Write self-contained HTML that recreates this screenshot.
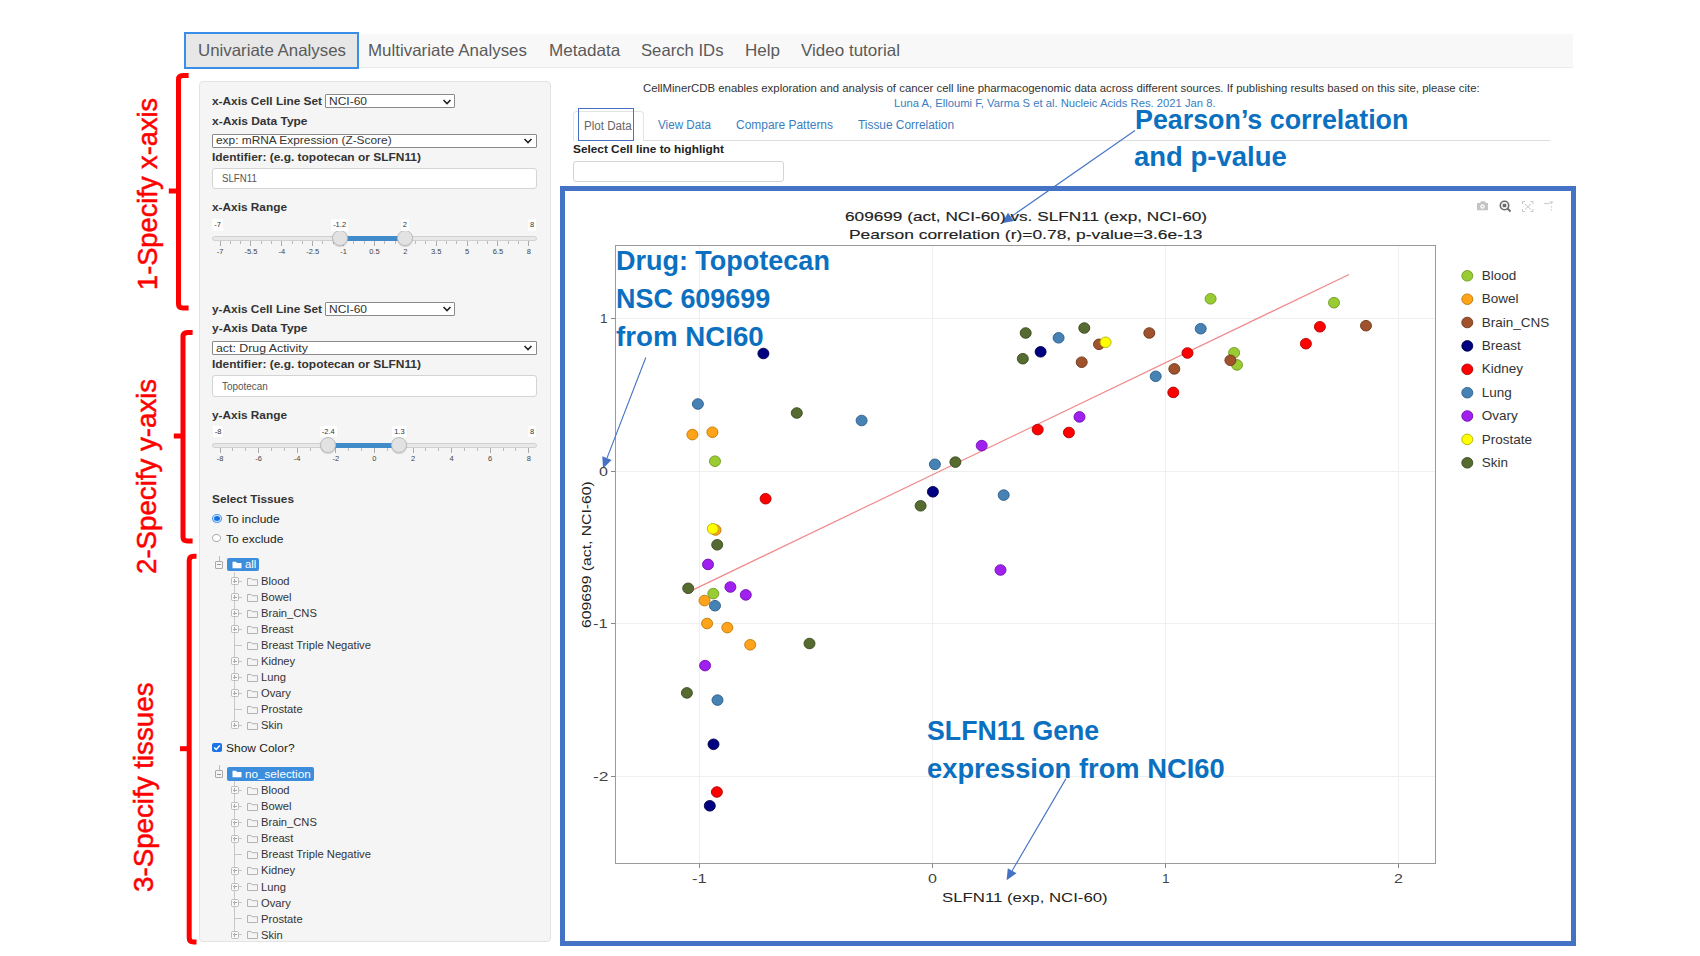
<!DOCTYPE html>
<html><head><meta charset="utf-8"><style>
html,body{margin:0;padding:0;background:#fff;}
body{width:1700px;height:956px;overflow:hidden;position:relative;font-family:'Liberation Sans', sans-serif;}
</style></head><body>
<div style="position:absolute;left:184.0px;top:34.0px;width:1388.5px;height:34.0px;background:#f8f8f8;border-bottom:1px solid #ececec;box-sizing:border-box"></div>
<div style="position:absolute;left:184.0px;top:31.5px;width:175.0px;height:37.0px;background:#e7e7e7;border:2.5px solid #3a8ee8;box-sizing:border-box"></div>
<div style="position:absolute;left:198.5px;top:80.5px;width:352.5px;height:861.5px;background:#f5f5f5;border:1px solid #e3e3e3;border-radius:4px;box-sizing:border-box"></div>
<div style="position:absolute;left:325.4px;top:94.4px;width:130.1px;height:14.1px;background:#fff;border:1px solid #8a8a8a;box-sizing:border-box;border-radius:1px"></div>
<svg style="position:absolute;left:441.5px;top:97.5px" width="10" height="8"><path d="M1.5 2 L5 5.5 L8.5 2" stroke="#222" stroke-width="1.6" fill="none"/></svg>
<div style="position:absolute;left:212.0px;top:133.5px;width:324.7px;height:14.0px;background:#fff;border:1px solid #8a8a8a;box-sizing:border-box;border-radius:1px"></div>
<svg style="position:absolute;left:522.7px;top:136.5px" width="10" height="8"><path d="M1.5 2 L5 5.5 L8.5 2" stroke="#222" stroke-width="1.6" fill="none"/></svg>
<div style="position:absolute;left:212.0px;top:168.4px;width:325.0px;height:20.9px;background:#fff;border:1px solid #d4d4d4;border-radius:3px;box-sizing:border-box"></div>
<div style="position:absolute;left:212.0px;top:235.7px;width:325.0px;height:5.0px;background:#e8e8e8;border:1px solid #d0d0d0;border-radius:3px;box-sizing:border-box"></div>
<div style="position:absolute;left:339.6px;top:235.7px;width:65.3px;height:5.0px;background:#428bca"></div>
<div style="position:absolute;left:219.5px;top:241.2px;width:1.0px;height:4.5px;background:#aaa"></div>
<div style="position:absolute;left:229.8px;top:241.2px;width:1.0px;height:2.5px;background:#bbb"></div>
<div style="position:absolute;left:240.1px;top:241.2px;width:1.0px;height:2.5px;background:#bbb"></div>
<div style="position:absolute;left:250.4px;top:241.2px;width:1.0px;height:4.5px;background:#aaa"></div>
<div style="position:absolute;left:260.7px;top:241.2px;width:1.0px;height:2.5px;background:#bbb"></div>
<div style="position:absolute;left:271.0px;top:241.2px;width:1.0px;height:2.5px;background:#bbb"></div>
<div style="position:absolute;left:281.3px;top:241.2px;width:1.0px;height:4.5px;background:#aaa"></div>
<div style="position:absolute;left:291.6px;top:241.2px;width:1.0px;height:2.5px;background:#bbb"></div>
<div style="position:absolute;left:301.8px;top:241.2px;width:1.0px;height:2.5px;background:#bbb"></div>
<div style="position:absolute;left:312.1px;top:241.2px;width:1.0px;height:4.5px;background:#aaa"></div>
<div style="position:absolute;left:322.4px;top:241.2px;width:1.0px;height:2.5px;background:#bbb"></div>
<div style="position:absolute;left:332.7px;top:241.2px;width:1.0px;height:2.5px;background:#bbb"></div>
<div style="position:absolute;left:343.0px;top:241.2px;width:1.0px;height:4.5px;background:#aaa"></div>
<div style="position:absolute;left:353.3px;top:241.2px;width:1.0px;height:2.5px;background:#bbb"></div>
<div style="position:absolute;left:363.6px;top:241.2px;width:1.0px;height:2.5px;background:#bbb"></div>
<div style="position:absolute;left:373.9px;top:241.2px;width:1.0px;height:4.5px;background:#aaa"></div>
<div style="position:absolute;left:384.2px;top:241.2px;width:1.0px;height:2.5px;background:#bbb"></div>
<div style="position:absolute;left:394.5px;top:241.2px;width:1.0px;height:2.5px;background:#bbb"></div>
<div style="position:absolute;left:404.8px;top:241.2px;width:1.0px;height:4.5px;background:#aaa"></div>
<div style="position:absolute;left:415.1px;top:241.2px;width:1.0px;height:2.5px;background:#bbb"></div>
<div style="position:absolute;left:425.4px;top:241.2px;width:1.0px;height:2.5px;background:#bbb"></div>
<div style="position:absolute;left:435.7px;top:241.2px;width:1.0px;height:4.5px;background:#aaa"></div>
<div style="position:absolute;left:446.0px;top:241.2px;width:1.0px;height:2.5px;background:#bbb"></div>
<div style="position:absolute;left:456.2px;top:241.2px;width:1.0px;height:2.5px;background:#bbb"></div>
<div style="position:absolute;left:466.5px;top:241.2px;width:1.0px;height:4.5px;background:#aaa"></div>
<div style="position:absolute;left:476.8px;top:241.2px;width:1.0px;height:2.5px;background:#bbb"></div>
<div style="position:absolute;left:487.1px;top:241.2px;width:1.0px;height:2.5px;background:#bbb"></div>
<div style="position:absolute;left:497.4px;top:241.2px;width:1.0px;height:4.5px;background:#aaa"></div>
<div style="position:absolute;left:507.7px;top:241.2px;width:1.0px;height:2.5px;background:#bbb"></div>
<div style="position:absolute;left:518.0px;top:241.2px;width:1.0px;height:2.5px;background:#bbb"></div>
<div style="position:absolute;left:528.3px;top:241.2px;width:1.0px;height:4.5px;background:#aaa"></div>
<div style="position:absolute;left:331.6px;top:230.2px;width:16px;height:16px;border-radius:50%;background:#e2e2e2;border:1px solid #bdbdbd;box-sizing:border-box;box-shadow:0 1px 1px rgba(0,0,0,0.15)"></div>
<div style="position:absolute;left:396.9px;top:230.2px;width:16px;height:16px;border-radius:50%;background:#e2e2e2;border:1px solid #bdbdbd;box-sizing:border-box;box-shadow:0 1px 1px rgba(0,0,0,0.15)"></div>
<div style="position:absolute;left:325.4px;top:302.4px;width:130.1px;height:14.1px;background:#fff;border:1px solid #8a8a8a;box-sizing:border-box;border-radius:1px"></div>
<svg style="position:absolute;left:441.5px;top:305.4px" width="10" height="8"><path d="M1.5 2 L5 5.5 L8.5 2" stroke="#222" stroke-width="1.6" fill="none"/></svg>
<div style="position:absolute;left:212.0px;top:341.1px;width:324.7px;height:13.5px;background:#fff;border:1px solid #8a8a8a;box-sizing:border-box;border-radius:1px"></div>
<svg style="position:absolute;left:522.7px;top:343.9px" width="10" height="8"><path d="M1.5 2 L5 5.5 L8.5 2" stroke="#222" stroke-width="1.6" fill="none"/></svg>
<div style="position:absolute;left:212.0px;top:375.3px;width:325.0px;height:22.0px;background:#fff;border:1px solid #d4d4d4;border-radius:3px;box-sizing:border-box"></div>
<div style="position:absolute;left:212.0px;top:442.5px;width:325.0px;height:5.0px;background:#e8e8e8;border:1px solid #d0d0d0;border-radius:3px;box-sizing:border-box"></div>
<div style="position:absolute;left:328.2px;top:442.5px;width:71.2px;height:5.0px;background:#428bca"></div>
<div style="position:absolute;left:219.5px;top:448.0px;width:1.0px;height:4.5px;background:#aaa"></div>
<div style="position:absolute;left:232.4px;top:448.0px;width:1.0px;height:2.5px;background:#bbb"></div>
<div style="position:absolute;left:245.2px;top:448.0px;width:1.0px;height:2.5px;background:#bbb"></div>
<div style="position:absolute;left:258.1px;top:448.0px;width:1.0px;height:4.5px;background:#aaa"></div>
<div style="position:absolute;left:271.0px;top:448.0px;width:1.0px;height:2.5px;background:#bbb"></div>
<div style="position:absolute;left:283.8px;top:448.0px;width:1.0px;height:2.5px;background:#bbb"></div>
<div style="position:absolute;left:296.7px;top:448.0px;width:1.0px;height:4.5px;background:#aaa"></div>
<div style="position:absolute;left:309.6px;top:448.0px;width:1.0px;height:2.5px;background:#bbb"></div>
<div style="position:absolute;left:322.4px;top:448.0px;width:1.0px;height:2.5px;background:#bbb"></div>
<div style="position:absolute;left:335.3px;top:448.0px;width:1.0px;height:4.5px;background:#aaa"></div>
<div style="position:absolute;left:348.2px;top:448.0px;width:1.0px;height:2.5px;background:#bbb"></div>
<div style="position:absolute;left:361.0px;top:448.0px;width:1.0px;height:2.5px;background:#bbb"></div>
<div style="position:absolute;left:373.9px;top:448.0px;width:1.0px;height:4.5px;background:#aaa"></div>
<div style="position:absolute;left:386.8px;top:448.0px;width:1.0px;height:2.5px;background:#bbb"></div>
<div style="position:absolute;left:399.6px;top:448.0px;width:1.0px;height:2.5px;background:#bbb"></div>
<div style="position:absolute;left:412.5px;top:448.0px;width:1.0px;height:4.5px;background:#aaa"></div>
<div style="position:absolute;left:425.4px;top:448.0px;width:1.0px;height:2.5px;background:#bbb"></div>
<div style="position:absolute;left:438.2px;top:448.0px;width:1.0px;height:2.5px;background:#bbb"></div>
<div style="position:absolute;left:451.1px;top:448.0px;width:1.0px;height:4.5px;background:#aaa"></div>
<div style="position:absolute;left:464.0px;top:448.0px;width:1.0px;height:2.5px;background:#bbb"></div>
<div style="position:absolute;left:476.8px;top:448.0px;width:1.0px;height:2.5px;background:#bbb"></div>
<div style="position:absolute;left:489.7px;top:448.0px;width:1.0px;height:4.5px;background:#aaa"></div>
<div style="position:absolute;left:502.6px;top:448.0px;width:1.0px;height:2.5px;background:#bbb"></div>
<div style="position:absolute;left:515.4px;top:448.0px;width:1.0px;height:2.5px;background:#bbb"></div>
<div style="position:absolute;left:528.3px;top:448.0px;width:1.0px;height:4.5px;background:#aaa"></div>
<div style="position:absolute;left:320.2px;top:437.0px;width:16px;height:16px;border-radius:50%;background:#e2e2e2;border:1px solid #bdbdbd;box-sizing:border-box;box-shadow:0 1px 1px rgba(0,0,0,0.15)"></div>
<div style="position:absolute;left:391.4px;top:437.0px;width:16px;height:16px;border-radius:50%;background:#e2e2e2;border:1px solid #bdbdbd;box-sizing:border-box;box-shadow:0 1px 1px rgba(0,0,0,0.15)"></div>
<svg style="position:absolute;left:210px;top:512px" width="14" height="13"><ellipse cx="7" cy="6.5" rx="4.5" ry="4" fill="#d6eaff" stroke="#4a9af0" stroke-width="1.1"/><ellipse cx="7" cy="6.5" rx="3" ry="2.5" fill="#1a6fe0"/></svg>
<div style="position:absolute;left:212.3px;top:533.5px;width:9px;height:8px;border-radius:50%;background:#fff;border:1px solid #a8a8a8;box-sizing:border-box"></div>
<div style="position:absolute;left:215px;top:560.5px;width:8px;height:8px;border:1px solid #aaa;box-sizing:border-box;border-radius:1px"></div>
<div style="position:absolute;left:217.0px;top:564.0px;width:4.0px;height:1.0px;background:#999"></div>
<div style="position:absolute;left:218.5px;top:555.5px;width:1.0px;height:5.0px;background:#bbb"></div>
<div style="position:absolute;left:227.3px;top:557.9px;width:32.0px;height:13.3px;background:#3c8ddb;border-radius:2px"></div>
<svg style="position:absolute;left:232px;top:560.5px" width="11" height="9"><path d="M0.5 0.8 h3.5 l1 1.2 h4.5 v5.2 h-9 z" fill="#fff"/></svg>
<div style="position:absolute;left:234.3px;top:571.5px;width:1.0px;height:153.9px;background:#c8c8c8"></div>
<div style="position:absolute;left:230.5px;top:577.0px;width:8px;height:8px;border:1px solid #bdbdbd;box-sizing:border-box;background:#f8f8f8;border-radius:1.5px"></div>
<div style="position:absolute;left:232.5px;top:580.5px;width:4.0px;height:1.0px;background:#aaa"></div>
<div style="position:absolute;left:234.0px;top:579.0px;width:1.0px;height:4.0px;background:#aaa"></div>
<div style="position:absolute;left:238.5px;top:580.5px;width:3.5px;height:1.0px;background:#c8c8c8"></div>
<svg style="position:absolute;left:247px;top:576.5px" width="11" height="9"><path d="M0.5 1.5 h3.5 l1 1.2 h5.5 v5.8 h-10 z" fill="none" stroke="#ababab" stroke-width="0.9"/></svg>
<div style="position:absolute;left:230.5px;top:593.0px;width:8px;height:8px;border:1px solid #bdbdbd;box-sizing:border-box;background:#f8f8f8;border-radius:1.5px"></div>
<div style="position:absolute;left:232.5px;top:596.5px;width:4.0px;height:1.0px;background:#aaa"></div>
<div style="position:absolute;left:234.0px;top:595.0px;width:1.0px;height:4.0px;background:#aaa"></div>
<div style="position:absolute;left:238.5px;top:596.5px;width:3.5px;height:1.0px;background:#c8c8c8"></div>
<svg style="position:absolute;left:247px;top:592.5px" width="11" height="9"><path d="M0.5 1.5 h3.5 l1 1.2 h5.5 v5.8 h-10 z" fill="none" stroke="#ababab" stroke-width="0.9"/></svg>
<div style="position:absolute;left:230.5px;top:609.1px;width:8px;height:8px;border:1px solid #bdbdbd;box-sizing:border-box;background:#f8f8f8;border-radius:1.5px"></div>
<div style="position:absolute;left:232.5px;top:612.6px;width:4.0px;height:1.0px;background:#aaa"></div>
<div style="position:absolute;left:234.0px;top:611.1px;width:1.0px;height:4.0px;background:#aaa"></div>
<div style="position:absolute;left:238.5px;top:612.6px;width:3.5px;height:1.0px;background:#c8c8c8"></div>
<svg style="position:absolute;left:247px;top:608.6px" width="11" height="9"><path d="M0.5 1.5 h3.5 l1 1.2 h5.5 v5.8 h-10 z" fill="none" stroke="#ababab" stroke-width="0.9"/></svg>
<div style="position:absolute;left:230.5px;top:625.1px;width:8px;height:8px;border:1px solid #bdbdbd;box-sizing:border-box;background:#f8f8f8;border-radius:1.5px"></div>
<div style="position:absolute;left:232.5px;top:628.6px;width:4.0px;height:1.0px;background:#aaa"></div>
<div style="position:absolute;left:234.0px;top:627.1px;width:1.0px;height:4.0px;background:#aaa"></div>
<div style="position:absolute;left:238.5px;top:628.6px;width:3.5px;height:1.0px;background:#c8c8c8"></div>
<svg style="position:absolute;left:247px;top:624.6px" width="11" height="9"><path d="M0.5 1.5 h3.5 l1 1.2 h5.5 v5.8 h-10 z" fill="none" stroke="#ababab" stroke-width="0.9"/></svg>
<div style="position:absolute;left:235.0px;top:644.7px;width:7.0px;height:1.0px;background:#c8c8c8"></div>
<svg style="position:absolute;left:247px;top:640.7px" width="11" height="9"><path d="M0.5 1.5 h3.5 l1 1.2 h5.5 v5.8 h-10 z" fill="none" stroke="#ababab" stroke-width="0.9"/></svg>
<div style="position:absolute;left:230.5px;top:657.2px;width:8px;height:8px;border:1px solid #bdbdbd;box-sizing:border-box;background:#f8f8f8;border-radius:1.5px"></div>
<div style="position:absolute;left:232.5px;top:660.7px;width:4.0px;height:1.0px;background:#aaa"></div>
<div style="position:absolute;left:234.0px;top:659.2px;width:1.0px;height:4.0px;background:#aaa"></div>
<div style="position:absolute;left:238.5px;top:660.7px;width:3.5px;height:1.0px;background:#c8c8c8"></div>
<svg style="position:absolute;left:247px;top:656.7px" width="11" height="9"><path d="M0.5 1.5 h3.5 l1 1.2 h5.5 v5.8 h-10 z" fill="none" stroke="#ababab" stroke-width="0.9"/></svg>
<div style="position:absolute;left:230.5px;top:673.2px;width:8px;height:8px;border:1px solid #bdbdbd;box-sizing:border-box;background:#f8f8f8;border-radius:1.5px"></div>
<div style="position:absolute;left:232.5px;top:676.7px;width:4.0px;height:1.0px;background:#aaa"></div>
<div style="position:absolute;left:234.0px;top:675.2px;width:1.0px;height:4.0px;background:#aaa"></div>
<div style="position:absolute;left:238.5px;top:676.7px;width:3.5px;height:1.0px;background:#c8c8c8"></div>
<svg style="position:absolute;left:247px;top:672.7px" width="11" height="9"><path d="M0.5 1.5 h3.5 l1 1.2 h5.5 v5.8 h-10 z" fill="none" stroke="#ababab" stroke-width="0.9"/></svg>
<div style="position:absolute;left:230.5px;top:689.3px;width:8px;height:8px;border:1px solid #bdbdbd;box-sizing:border-box;background:#f8f8f8;border-radius:1.5px"></div>
<div style="position:absolute;left:232.5px;top:692.8px;width:4.0px;height:1.0px;background:#aaa"></div>
<div style="position:absolute;left:234.0px;top:691.3px;width:1.0px;height:4.0px;background:#aaa"></div>
<div style="position:absolute;left:238.5px;top:692.8px;width:3.5px;height:1.0px;background:#c8c8c8"></div>
<svg style="position:absolute;left:247px;top:688.8px" width="11" height="9"><path d="M0.5 1.5 h3.5 l1 1.2 h5.5 v5.8 h-10 z" fill="none" stroke="#ababab" stroke-width="0.9"/></svg>
<div style="position:absolute;left:235.0px;top:708.8px;width:7.0px;height:1.0px;background:#c8c8c8"></div>
<svg style="position:absolute;left:247px;top:704.8px" width="11" height="9"><path d="M0.5 1.5 h3.5 l1 1.2 h5.5 v5.8 h-10 z" fill="none" stroke="#ababab" stroke-width="0.9"/></svg>
<div style="position:absolute;left:230.5px;top:721.4px;width:8px;height:8px;border:1px solid #bdbdbd;box-sizing:border-box;background:#f8f8f8;border-radius:1.5px"></div>
<div style="position:absolute;left:232.5px;top:724.9px;width:4.0px;height:1.0px;background:#aaa"></div>
<div style="position:absolute;left:234.0px;top:723.4px;width:1.0px;height:4.0px;background:#aaa"></div>
<div style="position:absolute;left:238.5px;top:724.9px;width:3.5px;height:1.0px;background:#c8c8c8"></div>
<svg style="position:absolute;left:247px;top:720.9px" width="11" height="9"><path d="M0.5 1.5 h3.5 l1 1.2 h5.5 v5.8 h-10 z" fill="none" stroke="#ababab" stroke-width="0.9"/></svg>
<div style="position:absolute;left:212.2px;top:743.2px;width:9.4px;height:8.6px;border-radius:2px;background:#1a73e8"></div>
<svg style="position:absolute;left:212.2px;top:743.2px" width="10" height="9"><path d="M2.2 4.5 L4.2 6.5 L7.8 2.5" stroke="#fff" stroke-width="1.5" fill="none"/></svg>
<div style="position:absolute;left:215px;top:770.0px;width:8px;height:8px;border:1px solid #aaa;box-sizing:border-box;border-radius:1px"></div>
<div style="position:absolute;left:217.0px;top:773.5px;width:4.0px;height:1.0px;background:#999"></div>
<div style="position:absolute;left:218.5px;top:765.0px;width:1.0px;height:5.0px;background:#bbb"></div>
<div style="position:absolute;left:227.3px;top:767.4px;width:86.4px;height:13.3px;background:#3c8ddb;border-radius:2px"></div>
<svg style="position:absolute;left:232px;top:770.0px" width="11" height="9"><path d="M0.5 0.8 h3.5 l1 1.2 h4.5 v5.2 h-9 z" fill="#fff"/></svg>
<div style="position:absolute;left:234.3px;top:781.0px;width:1.0px;height:153.9px;background:#c8c8c8"></div>
<div style="position:absolute;left:230.5px;top:786.4px;width:8px;height:8px;border:1px solid #bdbdbd;box-sizing:border-box;background:#f8f8f8;border-radius:1.5px"></div>
<div style="position:absolute;left:232.5px;top:789.9px;width:4.0px;height:1.0px;background:#aaa"></div>
<div style="position:absolute;left:234.0px;top:788.4px;width:1.0px;height:4.0px;background:#aaa"></div>
<div style="position:absolute;left:238.5px;top:789.9px;width:3.5px;height:1.0px;background:#c8c8c8"></div>
<svg style="position:absolute;left:247px;top:785.9px" width="11" height="9"><path d="M0.5 1.5 h3.5 l1 1.2 h5.5 v5.8 h-10 z" fill="none" stroke="#ababab" stroke-width="0.9"/></svg>
<div style="position:absolute;left:230.5px;top:802.4px;width:8px;height:8px;border:1px solid #bdbdbd;box-sizing:border-box;background:#f8f8f8;border-radius:1.5px"></div>
<div style="position:absolute;left:232.5px;top:805.9px;width:4.0px;height:1.0px;background:#aaa"></div>
<div style="position:absolute;left:234.0px;top:804.4px;width:1.0px;height:4.0px;background:#aaa"></div>
<div style="position:absolute;left:238.5px;top:805.9px;width:3.5px;height:1.0px;background:#c8c8c8"></div>
<svg style="position:absolute;left:247px;top:801.9px" width="11" height="9"><path d="M0.5 1.5 h3.5 l1 1.2 h5.5 v5.8 h-10 z" fill="none" stroke="#ababab" stroke-width="0.9"/></svg>
<div style="position:absolute;left:230.5px;top:818.5px;width:8px;height:8px;border:1px solid #bdbdbd;box-sizing:border-box;background:#f8f8f8;border-radius:1.5px"></div>
<div style="position:absolute;left:232.5px;top:822.0px;width:4.0px;height:1.0px;background:#aaa"></div>
<div style="position:absolute;left:234.0px;top:820.5px;width:1.0px;height:4.0px;background:#aaa"></div>
<div style="position:absolute;left:238.5px;top:822.0px;width:3.5px;height:1.0px;background:#c8c8c8"></div>
<svg style="position:absolute;left:247px;top:818.0px" width="11" height="9"><path d="M0.5 1.5 h3.5 l1 1.2 h5.5 v5.8 h-10 z" fill="none" stroke="#ababab" stroke-width="0.9"/></svg>
<div style="position:absolute;left:230.5px;top:834.5px;width:8px;height:8px;border:1px solid #bdbdbd;box-sizing:border-box;background:#f8f8f8;border-radius:1.5px"></div>
<div style="position:absolute;left:232.5px;top:838.0px;width:4.0px;height:1.0px;background:#aaa"></div>
<div style="position:absolute;left:234.0px;top:836.5px;width:1.0px;height:4.0px;background:#aaa"></div>
<div style="position:absolute;left:238.5px;top:838.0px;width:3.5px;height:1.0px;background:#c8c8c8"></div>
<svg style="position:absolute;left:247px;top:834.0px" width="11" height="9"><path d="M0.5 1.5 h3.5 l1 1.2 h5.5 v5.8 h-10 z" fill="none" stroke="#ababab" stroke-width="0.9"/></svg>
<div style="position:absolute;left:235.0px;top:854.1px;width:7.0px;height:1.0px;background:#c8c8c8"></div>
<svg style="position:absolute;left:247px;top:850.1px" width="11" height="9"><path d="M0.5 1.5 h3.5 l1 1.2 h5.5 v5.8 h-10 z" fill="none" stroke="#ababab" stroke-width="0.9"/></svg>
<div style="position:absolute;left:230.5px;top:866.6px;width:8px;height:8px;border:1px solid #bdbdbd;box-sizing:border-box;background:#f8f8f8;border-radius:1.5px"></div>
<div style="position:absolute;left:232.5px;top:870.1px;width:4.0px;height:1.0px;background:#aaa"></div>
<div style="position:absolute;left:234.0px;top:868.6px;width:1.0px;height:4.0px;background:#aaa"></div>
<div style="position:absolute;left:238.5px;top:870.1px;width:3.5px;height:1.0px;background:#c8c8c8"></div>
<svg style="position:absolute;left:247px;top:866.1px" width="11" height="9"><path d="M0.5 1.5 h3.5 l1 1.2 h5.5 v5.8 h-10 z" fill="none" stroke="#ababab" stroke-width="0.9"/></svg>
<div style="position:absolute;left:230.5px;top:882.7px;width:8px;height:8px;border:1px solid #bdbdbd;box-sizing:border-box;background:#f8f8f8;border-radius:1.5px"></div>
<div style="position:absolute;left:232.5px;top:886.2px;width:4.0px;height:1.0px;background:#aaa"></div>
<div style="position:absolute;left:234.0px;top:884.7px;width:1.0px;height:4.0px;background:#aaa"></div>
<div style="position:absolute;left:238.5px;top:886.2px;width:3.5px;height:1.0px;background:#c8c8c8"></div>
<svg style="position:absolute;left:247px;top:882.2px" width="11" height="9"><path d="M0.5 1.5 h3.5 l1 1.2 h5.5 v5.8 h-10 z" fill="none" stroke="#ababab" stroke-width="0.9"/></svg>
<div style="position:absolute;left:230.5px;top:898.8px;width:8px;height:8px;border:1px solid #bdbdbd;box-sizing:border-box;background:#f8f8f8;border-radius:1.5px"></div>
<div style="position:absolute;left:232.5px;top:902.2px;width:4.0px;height:1.0px;background:#aaa"></div>
<div style="position:absolute;left:234.0px;top:900.8px;width:1.0px;height:4.0px;background:#aaa"></div>
<div style="position:absolute;left:238.5px;top:902.2px;width:3.5px;height:1.0px;background:#c8c8c8"></div>
<svg style="position:absolute;left:247px;top:898.2px" width="11" height="9"><path d="M0.5 1.5 h3.5 l1 1.2 h5.5 v5.8 h-10 z" fill="none" stroke="#ababab" stroke-width="0.9"/></svg>
<div style="position:absolute;left:235.0px;top:918.3px;width:7.0px;height:1.0px;background:#c8c8c8"></div>
<svg style="position:absolute;left:247px;top:914.3px" width="11" height="9"><path d="M0.5 1.5 h3.5 l1 1.2 h5.5 v5.8 h-10 z" fill="none" stroke="#ababab" stroke-width="0.9"/></svg>
<div style="position:absolute;left:230.5px;top:930.9px;width:8px;height:8px;border:1px solid #bdbdbd;box-sizing:border-box;background:#f8f8f8;border-radius:1.5px"></div>
<div style="position:absolute;left:232.5px;top:934.4px;width:4.0px;height:1.0px;background:#aaa"></div>
<div style="position:absolute;left:234.0px;top:932.9px;width:1.0px;height:4.0px;background:#aaa"></div>
<div style="position:absolute;left:238.5px;top:934.4px;width:3.5px;height:1.0px;background:#c8c8c8"></div>
<svg style="position:absolute;left:247px;top:930.4px" width="11" height="9"><path d="M0.5 1.5 h3.5 l1 1.2 h5.5 v5.8 h-10 z" fill="none" stroke="#ababab" stroke-width="0.9"/></svg>
<div style="position:absolute;left:573.4px;top:140.0px;width:976.2px;height:1.0px;background:#dddddd"></div>
<div style="position:absolute;left:573.4px;top:111.4px;width:71px;height:29.6px;border:1px solid #e4e4e4;border-bottom:none;border-radius:4px 4px 0 0;background:#fff;box-sizing:border-box"></div>
<div style="position:absolute;left:578.1px;top:108.3px;width:55.9px;height:32.5px;border:1.8px solid #4670c4;box-sizing:border-box"></div>
<div style="position:absolute;left:573.4px;top:161.0px;width:210.6px;height:21.3px;background:#fff;border:1px solid #d4d4d4;border-radius:3px;box-sizing:border-box"></div>
<div style="position:absolute;left:560.0px;top:186.0px;width:1015.5px;height:759.5px;border:5px solid #4472c4;box-sizing:border-box"></div>
<div style="position:absolute;left:698.6px;top:245.0px;width:1.0px;height:618.8px;background:#efefef"></div>
<div style="position:absolute;left:698.6px;top:863.8px;width:1.0px;height:4.0px;background:#888"></div>
<div style="position:absolute;left:931.8px;top:245.0px;width:1.0px;height:618.8px;background:#efefef"></div>
<div style="position:absolute;left:931.8px;top:863.8px;width:1.0px;height:4.0px;background:#888"></div>
<div style="position:absolute;left:1165.0px;top:245.0px;width:1.0px;height:618.8px;background:#efefef"></div>
<div style="position:absolute;left:1165.0px;top:863.8px;width:1.0px;height:4.0px;background:#888"></div>
<div style="position:absolute;left:1398.2px;top:245.0px;width:1.0px;height:618.8px;background:#efefef"></div>
<div style="position:absolute;left:1398.2px;top:863.8px;width:1.0px;height:4.0px;background:#888"></div>
<div style="position:absolute;left:615.3px;top:318.2px;width:820.1px;height:1.0px;background:#efefef"></div>
<div style="position:absolute;left:611.3px;top:318.2px;width:4.0px;height:1.0px;background:#888"></div>
<div style="position:absolute;left:615.3px;top:470.8px;width:820.1px;height:1.0px;background:#efefef"></div>
<div style="position:absolute;left:611.3px;top:470.8px;width:4.0px;height:1.0px;background:#888"></div>
<div style="position:absolute;left:615.3px;top:623.4px;width:820.1px;height:1.0px;background:#efefef"></div>
<div style="position:absolute;left:611.3px;top:623.4px;width:4.0px;height:1.0px;background:#888"></div>
<div style="position:absolute;left:615.3px;top:776.0px;width:820.1px;height:1.0px;background:#efefef"></div>
<div style="position:absolute;left:611.3px;top:776.0px;width:4.0px;height:1.0px;background:#888"></div>
<div style="position:absolute;left:614.8px;top:244.5px;width:821.1px;height:619.8px;border:1.3px solid #9a9a9a;box-sizing:border-box"></div>
<svg style="position:absolute;left:0;top:0" width="1700" height="956">
<line x1="693" y1="589.9" x2="1349" y2="274.5" stroke="#f08a8a" stroke-width="1.2"/>
<ellipse cx="763.4" cy="353.5" rx="5.5" ry="5.3" fill="#000080" stroke="#00004a" stroke-width="0.9"/>
<ellipse cx="697.9" cy="404" rx="5.5" ry="5.3" fill="#4682b4" stroke="#2e5d88" stroke-width="0.9"/>
<ellipse cx="796.8" cy="413" rx="5.5" ry="5.3" fill="#556b2f" stroke="#3a4a1e" stroke-width="0.9"/>
<ellipse cx="861.6" cy="420.5" rx="5.5" ry="5.3" fill="#4682b4" stroke="#2e5d88" stroke-width="0.9"/>
<ellipse cx="692.4" cy="434.6" rx="5.5" ry="5.3" fill="#ffa31a" stroke="#c07800" stroke-width="0.9"/>
<ellipse cx="712.4" cy="432.2" rx="5.5" ry="5.3" fill="#ffa31a" stroke="#c07800" stroke-width="0.9"/>
<ellipse cx="715" cy="461.2" rx="5.5" ry="5.3" fill="#99cc33" stroke="#6e9a1e" stroke-width="0.9"/>
<ellipse cx="765.6" cy="498.7" rx="5.5" ry="5.3" fill="#ff0000" stroke="#b00000" stroke-width="0.9"/>
<ellipse cx="715.5" cy="530" rx="5.5" ry="5.3" fill="#ffa31a" stroke="#c07800" stroke-width="0.9"/>
<ellipse cx="712.8" cy="528.8" rx="5.5" ry="5.3" fill="#ffff00" stroke="#b0b000" stroke-width="0.9"/>
<ellipse cx="717.2" cy="544.8" rx="5.5" ry="5.3" fill="#556b2f" stroke="#3a4a1e" stroke-width="0.9"/>
<ellipse cx="708" cy="564.4" rx="5.5" ry="5.3" fill="#a020f0" stroke="#7010b0" stroke-width="0.9"/>
<ellipse cx="688.2" cy="588.3" rx="5.5" ry="5.3" fill="#556b2f" stroke="#3a4a1e" stroke-width="0.9"/>
<ellipse cx="730.4" cy="587" rx="5.5" ry="5.3" fill="#a020f0" stroke="#7010b0" stroke-width="0.9"/>
<ellipse cx="713.3" cy="593.6" rx="5.5" ry="5.3" fill="#99cc33" stroke="#6e9a1e" stroke-width="0.9"/>
<ellipse cx="745.8" cy="594.9" rx="5.5" ry="5.3" fill="#a020f0" stroke="#7010b0" stroke-width="0.9"/>
<ellipse cx="704.5" cy="600.6" rx="5.5" ry="5.3" fill="#ffa31a" stroke="#c07800" stroke-width="0.9"/>
<ellipse cx="715" cy="605.7" rx="5.5" ry="5.3" fill="#4682b4" stroke="#2e5d88" stroke-width="0.9"/>
<ellipse cx="707.1" cy="623.5" rx="5.5" ry="5.3" fill="#ffa31a" stroke="#c07800" stroke-width="0.9"/>
<ellipse cx="727.3" cy="627.6" rx="5.5" ry="5.3" fill="#ffa31a" stroke="#c07800" stroke-width="0.9"/>
<ellipse cx="750.2" cy="644.8" rx="5.5" ry="5.3" fill="#ffa31a" stroke="#c07800" stroke-width="0.9"/>
<ellipse cx="809.5" cy="643.5" rx="5.5" ry="5.3" fill="#556b2f" stroke="#3a4a1e" stroke-width="0.9"/>
<ellipse cx="705.1" cy="665.6" rx="5.5" ry="5.3" fill="#a020f0" stroke="#7010b0" stroke-width="0.9"/>
<ellipse cx="686.9" cy="692.9" rx="5.5" ry="5.3" fill="#556b2f" stroke="#3a4a1e" stroke-width="0.9"/>
<ellipse cx="717.5" cy="700.1" rx="5.5" ry="5.3" fill="#4682b4" stroke="#2e5d88" stroke-width="0.9"/>
<ellipse cx="713.5" cy="744.3" rx="5.5" ry="5.3" fill="#000080" stroke="#00004a" stroke-width="0.9"/>
<ellipse cx="716.9" cy="792" rx="5.5" ry="5.3" fill="#ff0000" stroke="#b00000" stroke-width="0.9"/>
<ellipse cx="709.8" cy="805.8" rx="5.5" ry="5.3" fill="#000080" stroke="#00004a" stroke-width="0.9"/>
<ellipse cx="1025.7" cy="333" rx="5.5" ry="5.3" fill="#556b2f" stroke="#3a4a1e" stroke-width="0.9"/>
<ellipse cx="1058.6" cy="337.8" rx="5.5" ry="5.3" fill="#4682b4" stroke="#2e5d88" stroke-width="0.9"/>
<ellipse cx="1084.3" cy="328" rx="5.5" ry="5.3" fill="#556b2f" stroke="#3a4a1e" stroke-width="0.9"/>
<ellipse cx="1040.6" cy="351.8" rx="5.5" ry="5.3" fill="#000080" stroke="#00004a" stroke-width="0.9"/>
<ellipse cx="1022.8" cy="358.7" rx="5.5" ry="5.3" fill="#556b2f" stroke="#3a4a1e" stroke-width="0.9"/>
<ellipse cx="1081.7" cy="362.2" rx="5.5" ry="5.3" fill="#a0522d" stroke="#6e3518" stroke-width="0.9"/>
<ellipse cx="1079.5" cy="416.9" rx="5.5" ry="5.3" fill="#a020f0" stroke="#7010b0" stroke-width="0.9"/>
<ellipse cx="1037.7" cy="429.6" rx="5.5" ry="5.3" fill="#ff0000" stroke="#b00000" stroke-width="0.9"/>
<ellipse cx="1068.9" cy="432.5" rx="5.5" ry="5.3" fill="#ff0000" stroke="#b00000" stroke-width="0.9"/>
<ellipse cx="981.7" cy="445.6" rx="5.5" ry="5.3" fill="#a020f0" stroke="#7010b0" stroke-width="0.9"/>
<ellipse cx="934.9" cy="464.3" rx="5.5" ry="5.3" fill="#4682b4" stroke="#2e5d88" stroke-width="0.9"/>
<ellipse cx="955.4" cy="462.1" rx="5.5" ry="5.3" fill="#556b2f" stroke="#3a4a1e" stroke-width="0.9"/>
<ellipse cx="932.9" cy="491.8" rx="5.5" ry="5.3" fill="#000080" stroke="#00004a" stroke-width="0.9"/>
<ellipse cx="1003.7" cy="495.1" rx="5.5" ry="5.3" fill="#4682b4" stroke="#2e5d88" stroke-width="0.9"/>
<ellipse cx="920.6" cy="505.8" rx="5.5" ry="5.3" fill="#556b2f" stroke="#3a4a1e" stroke-width="0.9"/>
<ellipse cx="1000.5" cy="570" rx="5.5" ry="5.3" fill="#a020f0" stroke="#7010b0" stroke-width="0.9"/>
<ellipse cx="1210.6" cy="298.8" rx="5.5" ry="5.3" fill="#99cc33" stroke="#6e9a1e" stroke-width="0.9"/>
<ellipse cx="1149.3" cy="333" rx="5.5" ry="5.3" fill="#a0522d" stroke="#6e3518" stroke-width="0.9"/>
<ellipse cx="1200.7" cy="328.7" rx="5.5" ry="5.3" fill="#4682b4" stroke="#2e5d88" stroke-width="0.9"/>
<ellipse cx="1099" cy="344.3" rx="5.5" ry="5.3" fill="#a0522d" stroke="#6e3518" stroke-width="0.9"/>
<ellipse cx="1105.6" cy="342.3" rx="5.5" ry="5.3" fill="#ffff00" stroke="#b0b000" stroke-width="0.9"/>
<ellipse cx="1187.5" cy="353" rx="5.5" ry="5.3" fill="#ff0000" stroke="#b00000" stroke-width="0.9"/>
<ellipse cx="1234.1" cy="352.8" rx="5.5" ry="5.3" fill="#99cc33" stroke="#6e9a1e" stroke-width="0.9"/>
<ellipse cx="1237" cy="364.9" rx="5.5" ry="5.3" fill="#99cc33" stroke="#6e9a1e" stroke-width="0.9"/>
<ellipse cx="1230.4" cy="360.3" rx="5.5" ry="5.3" fill="#a0522d" stroke="#6e3518" stroke-width="0.9"/>
<ellipse cx="1174.3" cy="368.9" rx="5.5" ry="5.3" fill="#a0522d" stroke="#6e3518" stroke-width="0.9"/>
<ellipse cx="1155.7" cy="376.3" rx="5.5" ry="5.3" fill="#4682b4" stroke="#2e5d88" stroke-width="0.9"/>
<ellipse cx="1173.3" cy="392.4" rx="5.5" ry="5.3" fill="#ff0000" stroke="#b00000" stroke-width="0.9"/>
<ellipse cx="1334" cy="302.7" rx="5.5" ry="5.3" fill="#99cc33" stroke="#6e9a1e" stroke-width="0.9"/>
<ellipse cx="1319.9" cy="326.8" rx="5.5" ry="5.3" fill="#ff0000" stroke="#b00000" stroke-width="0.9"/>
<ellipse cx="1305.9" cy="343.7" rx="5.5" ry="5.3" fill="#ff0000" stroke="#b00000" stroke-width="0.9"/>
<ellipse cx="1366" cy="325.7" rx="5.5" ry="5.3" fill="#a0522d" stroke="#6e3518" stroke-width="0.9"/>
<ellipse cx="1467.3" cy="275.8" rx="5.5" ry="5.3" fill="#99cc33" stroke="#6e9a1e" stroke-width="0.9"/>
<ellipse cx="1467.3" cy="299.2" rx="5.5" ry="5.3" fill="#ffa31a" stroke="#c07800" stroke-width="0.9"/>
<ellipse cx="1467.3" cy="322.5" rx="5.5" ry="5.3" fill="#a0522d" stroke="#6e3518" stroke-width="0.9"/>
<ellipse cx="1467.3" cy="345.9" rx="5.5" ry="5.3" fill="#000080" stroke="#00004a" stroke-width="0.9"/>
<ellipse cx="1467.3" cy="369.3" rx="5.5" ry="5.3" fill="#ff0000" stroke="#b00000" stroke-width="0.9"/>
<ellipse cx="1467.3" cy="392.7" rx="5.5" ry="5.3" fill="#4682b4" stroke="#2e5d88" stroke-width="0.9"/>
<ellipse cx="1467.3" cy="416.0" rx="5.5" ry="5.3" fill="#a020f0" stroke="#7010b0" stroke-width="0.9"/>
<ellipse cx="1467.3" cy="439.4" rx="5.5" ry="5.3" fill="#ffff00" stroke="#b0b000" stroke-width="0.9"/>
<ellipse cx="1467.3" cy="462.8" rx="5.5" ry="5.3" fill="#556b2f" stroke="#3a4a1e" stroke-width="0.9"/>
<line x1="1135" y1="130.5" x2="1010.8" y2="216.9" stroke="#4472c4" stroke-width="1.1"/>
<path d="M1001.8,223.2 L1008.0,212.8 L1013.7,221.0 Z" fill="#4472c4"/>
<line x1="645.8" y1="357.5" x2="607.0" y2="458.1" stroke="#4472c4" stroke-width="1.1"/>
<path d="M603,468.4 L602.3,456.3 L611.6,459.9 Z" fill="#4472c4"/>
<line x1="1066" y1="778.6" x2="1012.1" y2="870.8" stroke="#4472c4" stroke-width="1.1"/>
<path d="M1006.6,880.3 L1007.8,868.3 L1016.5,873.3 Z" fill="#4472c4"/>
</svg>
<svg style="position:absolute;left:1474px;top:198px" width="86" height="16">
<g fill="#c4c4c4"><path d="M3 5 h3 l1.2 -1.8 h3.6 l1.2 1.8 h2 v7.2 h-11 z"/></g><circle cx="8.5" cy="8.5" r="2.2" fill="#fff"/><circle cx="8.5" cy="8.5" r="1" fill="#c4c4c4"/>
<circle cx="30.5" cy="7.5" r="4.2" fill="none" stroke="#6a6a6a" stroke-width="1.6"/><rect x="28.7" y="5.8" width="3.6" height="3.4" fill="#6a6a6a"/><path d="M33.5 10.5 L36.5 13.5" stroke="#6a6a6a" stroke-width="1.8"/>
<g stroke="#c8c8c8" stroke-width="1" fill="none"><path d="M48.5 6 v-2.5 h2.5 M56.5 3.5 h2.5 v2.5 M59 11 v2.5 h-2.5 M51 13.5 h-2.5 v-2.5"/><path d="M51 6 l6 5.5 M57 6 l-6 5.5"/></g>
<g stroke="#cfcfcf" stroke-width="1.2" fill="none"><path d="M70 5.5 h6"/><path d="M77.5 3.5 v2.5 M77.5 8 v1.5 M77.5 11 v1.5" /></g><path d="M75 3.5 l2.5 2 l2.5 -2 z" fill="#cfcfcf"/>
</svg>
<svg style="position:absolute;left:0;top:0" width="300" height="956"><path d="M188.6,75.4 H183.0 Q178.5,75.4 178.5,79.4 V304 Q178.5,308 183.0,308 H188.6" stroke="#ff0000" stroke-width="5" fill="none"/><path d="M168.8,191 H178.5" stroke="#ff0000" stroke-width="5"/></svg>
<svg style="position:absolute;left:0;top:0" width="300" height="956"><path d="M192.6,332.5 H187.5 Q183,332.5 183,336.5 V537 Q183,541 187.5,541 H192.6" stroke="#ff0000" stroke-width="5" fill="none"/><path d="M173.8,436 H183" stroke="#ff0000" stroke-width="5"/></svg>
<svg style="position:absolute;left:0;top:0" width="300" height="956"><path d="M196.5,556.3 H193.7 Q189.2,556.3 189.2,560.3 V938 Q189.2,942 193.7,942 H196.5" stroke="#ff0000" stroke-width="5" fill="none"/><path d="M180,748.7 H189.2" stroke="#ff0000" stroke-width="5"/></svg>
<div style="position:absolute;white-space:pre;line-height:16.5px;font-family:'Liberation Sans', sans-serif;font-size:16.5px;font-weight:normal;color:#5a5a5a;left:198.00px;top:42.23px;transform-origin:0 0;transform:scaleX(1.0212);">Univariate Analyses</div>
<div style="position:absolute;white-space:pre;line-height:16.5px;font-family:'Liberation Sans', sans-serif;font-size:16.5px;font-weight:normal;color:#5a5a5a;left:367.60px;top:42.23px;transform-origin:0 0;transform:scaleX(1.0258);">Multivariate Analyses</div>
<div style="position:absolute;white-space:pre;line-height:16.5px;font-family:'Liberation Sans', sans-serif;font-size:16.5px;font-weight:normal;color:#5a5a5a;left:548.70px;top:42.23px;transform-origin:0 0;transform:scaleX(1.0364);">Metadata</div>
<div style="position:absolute;white-space:pre;line-height:16.5px;font-family:'Liberation Sans', sans-serif;font-size:16.5px;font-weight:normal;color:#5a5a5a;left:641.00px;top:42.23px;transform-origin:0 0;transform:scaleX(1.0107);">Search IDs</div>
<div style="position:absolute;white-space:pre;line-height:16.5px;font-family:'Liberation Sans', sans-serif;font-size:16.5px;font-weight:normal;color:#5a5a5a;left:745.00px;top:42.23px;transform-origin:0 0;transform:scaleX(1.0313);">Help</div>
<div style="position:absolute;white-space:pre;line-height:16.5px;font-family:'Liberation Sans', sans-serif;font-size:16.5px;font-weight:normal;color:#5a5a5a;left:801.00px;top:42.23px;transform-origin:0 0;transform:scaleX(1.0311);">Video tutorial</div>
<div style="position:absolute;white-space:pre;line-height:11.5px;font-family:'Liberation Sans', sans-serif;font-size:11.5px;font-weight:bold;color:#333;left:212.00px;top:96.27px;transform-origin:0 0;transform:scaleX(1.0306);">x-Axis Cell Line Set</div>
<div style="position:absolute;white-space:pre;line-height:11.5px;font-family:'Liberation Sans', sans-serif;font-size:11.5px;font-weight:normal;color:#333;left:329.30px;top:96.37px;transform-origin:0 0;transform:scaleX(1.0429);">NCI-60</div>
<div style="position:absolute;white-space:pre;line-height:11.5px;font-family:'Liberation Sans', sans-serif;font-size:11.5px;font-weight:bold;color:#333;left:212.00px;top:115.77px;transform-origin:0 0;transform:scaleX(1.0400);">x-Axis Data Type</div>
<div style="position:absolute;white-space:pre;line-height:11.5px;font-family:'Liberation Sans', sans-serif;font-size:11.5px;font-weight:normal;color:#333;left:215.70px;top:135.07px;transform-origin:0 0;transform:scaleX(1.0329);">exp: mRNA Expression (Z-Score)</div>
<div style="position:absolute;white-space:pre;line-height:11.5px;font-family:'Liberation Sans', sans-serif;font-size:11.5px;font-weight:bold;color:#333;left:212.00px;top:151.67px;transform-origin:0 0;transform:scaleX(1.0383);">Identifier: (e.g. topotecan or SLFN11)</div>
<div style="position:absolute;white-space:pre;line-height:10px;font-family:'Liberation Sans', sans-serif;font-size:10px;font-weight:normal;color:#555;left:221.60px;top:174.03px;transform-origin:0 0;transform:scaleX(0.9679);">SLFN11</div>
<div style="position:absolute;white-space:pre;line-height:11.5px;font-family:'Liberation Sans', sans-serif;font-size:11.5px;font-weight:bold;color:#333;left:212.40px;top:201.77px;transform-origin:0 0;transform:scaleX(1.0294);">x-Axis Range</div>
<div style="position:absolute;white-space:pre;line-height:7.5px;font-family:'Liberation Sans', sans-serif;font-size:7.5px;font-weight:normal;color:#444;left:216.66px;top:248.05px;">-7</div>
<div style="position:absolute;white-space:pre;line-height:7.5px;font-family:'Liberation Sans', sans-serif;font-size:7.5px;font-weight:normal;color:#444;left:244.41px;top:248.05px;">-5.5</div>
<div style="position:absolute;white-space:pre;line-height:7.5px;font-family:'Liberation Sans', sans-serif;font-size:7.5px;font-weight:normal;color:#444;left:278.42px;top:248.05px;">-4</div>
<div style="position:absolute;white-space:pre;line-height:7.5px;font-family:'Liberation Sans', sans-serif;font-size:7.5px;font-weight:normal;color:#444;left:306.17px;top:248.05px;">-2.5</div>
<div style="position:absolute;white-space:pre;line-height:7.5px;font-family:'Liberation Sans', sans-serif;font-size:7.5px;font-weight:normal;color:#444;left:340.18px;top:248.05px;">-1</div>
<div style="position:absolute;white-space:pre;line-height:7.5px;font-family:'Liberation Sans', sans-serif;font-size:7.5px;font-weight:normal;color:#444;left:369.18px;top:248.05px;">0.5</div>
<div style="position:absolute;white-space:pre;line-height:7.5px;font-family:'Liberation Sans', sans-serif;font-size:7.5px;font-weight:normal;color:#444;left:403.19px;top:248.05px;">2</div>
<div style="position:absolute;white-space:pre;line-height:7.5px;font-family:'Liberation Sans', sans-serif;font-size:7.5px;font-weight:normal;color:#444;left:430.94px;top:248.05px;">3.5</div>
<div style="position:absolute;white-space:pre;line-height:7.5px;font-family:'Liberation Sans', sans-serif;font-size:7.5px;font-weight:normal;color:#444;left:464.95px;top:248.05px;">5</div>
<div style="position:absolute;white-space:pre;line-height:7.5px;font-family:'Liberation Sans', sans-serif;font-size:7.5px;font-weight:normal;color:#444;left:492.70px;top:248.05px;">6.5</div>
<div style="position:absolute;white-space:pre;line-height:7.5px;font-family:'Liberation Sans', sans-serif;font-size:7.5px;font-weight:normal;color:#444;left:526.71px;top:248.05px;">8</div>
<div style="position:absolute;white-space:pre;line-height:7.5px;font-family:'Liberation Sans', sans-serif;font-size:7.5px;font-weight:normal;color:#333;background:#fff;box-shadow:0 0 0 2px #fff;left:214.16px;top:221.05px;">-7</div>
<div style="position:absolute;white-space:pre;line-height:7.5px;font-family:'Liberation Sans', sans-serif;font-size:7.5px;font-weight:normal;color:#333;background:#fff;box-shadow:0 0 0 2px #fff;left:333.13px;top:221.05px;">-1.2</div>
<div style="position:absolute;white-space:pre;line-height:7.5px;font-family:'Liberation Sans', sans-serif;font-size:7.5px;font-weight:normal;color:#333;background:#fff;box-shadow:0 0 0 2px #fff;left:402.81px;top:221.05px;">2</div>
<div style="position:absolute;white-space:pre;line-height:7.5px;font-family:'Liberation Sans', sans-serif;font-size:7.5px;font-weight:normal;color:#333;background:#fff;box-shadow:0 0 0 2px #fff;left:529.91px;top:221.05px;">8</div>
<div style="position:absolute;white-space:pre;line-height:11.5px;font-family:'Liberation Sans', sans-serif;font-size:11.5px;font-weight:bold;color:#333;left:212.00px;top:303.57px;transform-origin:0 0;transform:scaleX(1.0306);">y-Axis Cell Line Set</div>
<div style="position:absolute;white-space:pre;line-height:11.5px;font-family:'Liberation Sans', sans-serif;font-size:11.5px;font-weight:normal;color:#333;left:329.30px;top:304.37px;transform-origin:0 0;transform:scaleX(1.0429);">NCI-60</div>
<div style="position:absolute;white-space:pre;line-height:11.5px;font-family:'Liberation Sans', sans-serif;font-size:11.5px;font-weight:bold;color:#333;left:212.00px;top:322.67px;transform-origin:0 0;transform:scaleX(1.0400);">y-Axis Data Type</div>
<div style="position:absolute;white-space:pre;line-height:11.5px;font-family:'Liberation Sans', sans-serif;font-size:11.5px;font-weight:normal;color:#333;left:215.70px;top:343.07px;transform-origin:0 0;transform:scaleX(1.0719);">act: Drug Activity</div>
<div style="position:absolute;white-space:pre;line-height:11.5px;font-family:'Liberation Sans', sans-serif;font-size:11.5px;font-weight:bold;color:#333;left:212.00px;top:358.57px;transform-origin:0 0;transform:scaleX(1.0383);">Identifier: (e.g. topotecan or SLFN11)</div>
<div style="position:absolute;white-space:pre;line-height:10px;font-family:'Liberation Sans', sans-serif;font-size:10px;font-weight:normal;color:#555;left:221.60px;top:382.04px;transform-origin:0 0;transform:scaleX(0.9901);">Topotecan</div>
<div style="position:absolute;white-space:pre;line-height:11.5px;font-family:'Liberation Sans', sans-serif;font-size:11.5px;font-weight:bold;color:#333;left:212.40px;top:409.77px;transform-origin:0 0;transform:scaleX(1.0294);">y-Axis Range</div>
<div style="position:absolute;white-space:pre;line-height:7.5px;font-family:'Liberation Sans', sans-serif;font-size:7.5px;font-weight:normal;color:#444;left:216.66px;top:454.85px;">-8</div>
<div style="position:absolute;white-space:pre;line-height:7.5px;font-family:'Liberation Sans', sans-serif;font-size:7.5px;font-weight:normal;color:#444;left:255.26px;top:454.85px;">-6</div>
<div style="position:absolute;white-space:pre;line-height:7.5px;font-family:'Liberation Sans', sans-serif;font-size:7.5px;font-weight:normal;color:#444;left:293.86px;top:454.85px;">-4</div>
<div style="position:absolute;white-space:pre;line-height:7.5px;font-family:'Liberation Sans', sans-serif;font-size:7.5px;font-weight:normal;color:#444;left:332.46px;top:454.85px;">-2</div>
<div style="position:absolute;white-space:pre;line-height:7.5px;font-family:'Liberation Sans', sans-serif;font-size:7.5px;font-weight:normal;color:#444;left:372.31px;top:454.85px;">0</div>
<div style="position:absolute;white-space:pre;line-height:7.5px;font-family:'Liberation Sans', sans-serif;font-size:7.5px;font-weight:normal;color:#444;left:410.91px;top:454.85px;">2</div>
<div style="position:absolute;white-space:pre;line-height:7.5px;font-family:'Liberation Sans', sans-serif;font-size:7.5px;font-weight:normal;color:#444;left:449.51px;top:454.85px;">4</div>
<div style="position:absolute;white-space:pre;line-height:7.5px;font-family:'Liberation Sans', sans-serif;font-size:7.5px;font-weight:normal;color:#444;left:488.11px;top:454.85px;">6</div>
<div style="position:absolute;white-space:pre;line-height:7.5px;font-family:'Liberation Sans', sans-serif;font-size:7.5px;font-weight:normal;color:#444;left:526.71px;top:454.85px;">8</div>
<div style="position:absolute;white-space:pre;line-height:7.5px;font-family:'Liberation Sans', sans-serif;font-size:7.5px;font-weight:normal;color:#333;background:#fff;box-shadow:0 0 0 2px #fff;left:214.66px;top:427.85px;">-8</div>
<div style="position:absolute;white-space:pre;line-height:7.5px;font-family:'Liberation Sans', sans-serif;font-size:7.5px;font-weight:normal;color:#333;background:#fff;box-shadow:0 0 0 2px #fff;left:321.73px;top:427.85px;">-2.4</div>
<div style="position:absolute;white-space:pre;line-height:7.5px;font-family:'Liberation Sans', sans-serif;font-size:7.5px;font-weight:normal;color:#333;background:#fff;box-shadow:0 0 0 2px #fff;left:394.18px;top:427.85px;">1.3</div>
<div style="position:absolute;white-space:pre;line-height:7.5px;font-family:'Liberation Sans', sans-serif;font-size:7.5px;font-weight:normal;color:#333;background:#fff;box-shadow:0 0 0 2px #fff;left:529.91px;top:427.85px;">8</div>
<div style="position:absolute;white-space:pre;line-height:11.5px;font-family:'Liberation Sans', sans-serif;font-size:11.5px;font-weight:bold;color:#333;left:212.20px;top:493.77px;transform-origin:0 0;transform:scaleX(1.0288);">Select Tissues</div>
<div style="position:absolute;white-space:pre;line-height:11px;font-family:'Liberation Sans', sans-serif;font-size:11px;font-weight:normal;color:#222;left:226.40px;top:513.99px;transform-origin:0 0;transform:scaleX(1.0818);">To include</div>
<div style="position:absolute;white-space:pre;line-height:11px;font-family:'Liberation Sans', sans-serif;font-size:11px;font-weight:normal;color:#222;left:226.40px;top:533.69px;transform-origin:0 0;transform:scaleX(1.0914);">To exclude</div>
<div style="position:absolute;white-space:pre;line-height:10.5px;font-family:'Liberation Sans', sans-serif;font-size:10.5px;font-weight:normal;color:#fff;left:245.30px;top:559.21px;transform-origin:0 0;transform:scaleX(1.0746);">all</div>
<div style="position:absolute;white-space:pre;line-height:10.5px;font-family:'Liberation Sans', sans-serif;font-size:10.5px;font-weight:normal;color:#333;left:261.20px;top:575.81px;transform-origin:0 0;transform:scaleX(1.0640);">Blood</div>
<div style="position:absolute;white-space:pre;line-height:10.5px;font-family:'Liberation Sans', sans-serif;font-size:10.5px;font-weight:normal;color:#333;left:261.20px;top:591.85px;transform-origin:0 0;transform:scaleX(1.0640);">Bowel</div>
<div style="position:absolute;white-space:pre;line-height:10.5px;font-family:'Liberation Sans', sans-serif;font-size:10.5px;font-weight:normal;color:#333;left:261.20px;top:607.89px;transform-origin:0 0;transform:scaleX(1.0640);">Brain_CNS</div>
<div style="position:absolute;white-space:pre;line-height:10.5px;font-family:'Liberation Sans', sans-serif;font-size:10.5px;font-weight:normal;color:#333;left:261.20px;top:623.93px;transform-origin:0 0;transform:scaleX(1.0640);">Breast</div>
<div style="position:absolute;white-space:pre;line-height:10.5px;font-family:'Liberation Sans', sans-serif;font-size:10.5px;font-weight:normal;color:#333;left:261.20px;top:639.97px;transform-origin:0 0;transform:scaleX(1.0640);">Breast Triple Negative</div>
<div style="position:absolute;white-space:pre;line-height:10.5px;font-family:'Liberation Sans', sans-serif;font-size:10.5px;font-weight:normal;color:#333;left:261.20px;top:656.01px;transform-origin:0 0;transform:scaleX(1.0640);">Kidney</div>
<div style="position:absolute;white-space:pre;line-height:10.5px;font-family:'Liberation Sans', sans-serif;font-size:10.5px;font-weight:normal;color:#333;left:261.20px;top:672.05px;transform-origin:0 0;transform:scaleX(1.0640);">Lung</div>
<div style="position:absolute;white-space:pre;line-height:10.5px;font-family:'Liberation Sans', sans-serif;font-size:10.5px;font-weight:normal;color:#333;left:261.20px;top:688.09px;transform-origin:0 0;transform:scaleX(1.0640);">Ovary</div>
<div style="position:absolute;white-space:pre;line-height:10.5px;font-family:'Liberation Sans', sans-serif;font-size:10.5px;font-weight:normal;color:#333;left:261.20px;top:704.13px;transform-origin:0 0;transform:scaleX(1.0640);">Prostate</div>
<div style="position:absolute;white-space:pre;line-height:10.5px;font-family:'Liberation Sans', sans-serif;font-size:10.5px;font-weight:normal;color:#333;left:261.20px;top:720.17px;transform-origin:0 0;transform:scaleX(1.0640);">Skin</div>
<div style="position:absolute;white-space:pre;line-height:11px;font-family:'Liberation Sans', sans-serif;font-size:11px;font-weight:normal;color:#222;left:226.40px;top:743.39px;transform-origin:0 0;transform:scaleX(1.0892);">Show Color?</div>
<div style="position:absolute;white-space:pre;line-height:10.5px;font-family:'Liberation Sans', sans-serif;font-size:10.5px;font-weight:normal;color:#fff;left:245.30px;top:768.71px;transform-origin:0 0;transform:scaleX(1.1141);">no_selection</div>
<div style="position:absolute;white-space:pre;line-height:10.5px;font-family:'Liberation Sans', sans-serif;font-size:10.5px;font-weight:normal;color:#333;left:261.20px;top:785.21px;transform-origin:0 0;transform:scaleX(1.0640);">Blood</div>
<div style="position:absolute;white-space:pre;line-height:10.5px;font-family:'Liberation Sans', sans-serif;font-size:10.5px;font-weight:normal;color:#333;left:261.20px;top:801.26px;transform-origin:0 0;transform:scaleX(1.0640);">Bowel</div>
<div style="position:absolute;white-space:pre;line-height:10.5px;font-family:'Liberation Sans', sans-serif;font-size:10.5px;font-weight:normal;color:#333;left:261.20px;top:817.31px;transform-origin:0 0;transform:scaleX(1.0640);">Brain_CNS</div>
<div style="position:absolute;white-space:pre;line-height:10.5px;font-family:'Liberation Sans', sans-serif;font-size:10.5px;font-weight:normal;color:#333;left:261.20px;top:833.36px;transform-origin:0 0;transform:scaleX(1.0640);">Breast</div>
<div style="position:absolute;white-space:pre;line-height:10.5px;font-family:'Liberation Sans', sans-serif;font-size:10.5px;font-weight:normal;color:#333;left:261.20px;top:849.41px;transform-origin:0 0;transform:scaleX(1.0640);">Breast Triple Negative</div>
<div style="position:absolute;white-space:pre;line-height:10.5px;font-family:'Liberation Sans', sans-serif;font-size:10.5px;font-weight:normal;color:#333;left:261.20px;top:865.46px;transform-origin:0 0;transform:scaleX(1.0640);">Kidney</div>
<div style="position:absolute;white-space:pre;line-height:10.5px;font-family:'Liberation Sans', sans-serif;font-size:10.5px;font-weight:normal;color:#333;left:261.20px;top:881.51px;transform-origin:0 0;transform:scaleX(1.0640);">Lung</div>
<div style="position:absolute;white-space:pre;line-height:10.5px;font-family:'Liberation Sans', sans-serif;font-size:10.5px;font-weight:normal;color:#333;left:261.20px;top:897.56px;transform-origin:0 0;transform:scaleX(1.0640);">Ovary</div>
<div style="position:absolute;white-space:pre;line-height:10.5px;font-family:'Liberation Sans', sans-serif;font-size:10.5px;font-weight:normal;color:#333;left:261.20px;top:913.61px;transform-origin:0 0;transform:scaleX(1.0640);">Prostate</div>
<div style="position:absolute;white-space:pre;line-height:10.5px;font-family:'Liberation Sans', sans-serif;font-size:10.5px;font-weight:normal;color:#333;left:261.20px;top:929.66px;transform-origin:0 0;transform:scaleX(1.0640);">Skin</div>
<div style="position:absolute;white-space:pre;line-height:11px;font-family:'Liberation Sans', sans-serif;font-size:11px;font-weight:normal;color:#333;left:642.60px;top:82.69px;transform-origin:0 0;transform:scaleX(1.0346);">CellMinerCDB enables exploration and analysis of cancer cell line pharmacogenomic data across different sources. If publishing results based on this site, please cite:</div>
<div style="position:absolute;white-space:pre;line-height:11px;font-family:'Liberation Sans', sans-serif;font-size:11px;font-weight:normal;color:#3a7dc0;left:894.40px;top:97.89px;transform-origin:0 0;transform:scaleX(1.0220);">Luna A, Elloumi F, Varma S et al. Nucleic Acids Res. 2021 Jan 8.</div>
<div style="position:absolute;white-space:pre;line-height:12px;font-family:'Liberation Sans', sans-serif;font-size:12px;font-weight:normal;color:#666;left:584.30px;top:119.64px;transform-origin:0 0;transform:scaleX(0.9664);">Plot Data</div>
<div style="position:absolute;white-space:pre;line-height:12px;font-family:'Liberation Sans', sans-serif;font-size:12px;font-weight:normal;color:#3a7dc0;left:658.00px;top:119.24px;transform-origin:0 0;transform:scaleX(0.9728);">View Data</div>
<div style="position:absolute;white-space:pre;line-height:12px;font-family:'Liberation Sans', sans-serif;font-size:12px;font-weight:normal;color:#3a7dc0;left:736.00px;top:119.24px;transform-origin:0 0;transform:scaleX(0.9960);">Compare Patterns</div>
<div style="position:absolute;white-space:pre;line-height:12px;font-family:'Liberation Sans', sans-serif;font-size:12px;font-weight:normal;color:#3a7dc0;left:858.00px;top:119.24px;transform-origin:0 0;transform:scaleX(0.9903);">Tissue Correlation</div>
<div style="position:absolute;white-space:pre;line-height:11.5px;font-family:'Liberation Sans', sans-serif;font-size:11.5px;font-weight:bold;color:#222;left:573.00px;top:144.37px;transform-origin:0 0;transform:scaleX(1.0274);">Select Cell line to highlight</div>
<div style="position:absolute;white-space:pre;line-height:13.5px;font-family:'Liberation Sans', sans-serif;font-size:13.5px;font-weight:normal;color:#444;left:691.75px;top:872.07px;transform-origin:0 0;transform:scaleX(1.2234);">-1</div>
<div style="position:absolute;white-space:pre;line-height:13.5px;font-family:'Liberation Sans', sans-serif;font-size:13.5px;font-weight:normal;color:#444;left:927.85px;top:872.07px;transform-origin:0 0;transform:scaleX(1.1842);">0</div>
<div style="position:absolute;white-space:pre;line-height:13.5px;font-family:'Liberation Sans', sans-serif;font-size:13.5px;font-weight:normal;color:#444;left:1161.70px;top:872.07px;transform-origin:0 0;transform:scaleX(1.0112);">1</div>
<div style="position:absolute;white-space:pre;line-height:13.5px;font-family:'Liberation Sans', sans-serif;font-size:13.5px;font-weight:normal;color:#444;left:1394.25px;top:872.07px;transform-origin:0 0;transform:scaleX(1.1842);">2</div>
<div style="position:absolute;white-space:pre;line-height:13.5px;font-family:'Liberation Sans', sans-serif;font-size:13.5px;font-weight:normal;color:#444;left:600.40px;top:312.07px;transform-origin:0 0;transform:scaleX(1.0112);">1</div>
<div style="position:absolute;white-space:pre;line-height:13.5px;font-family:'Liberation Sans', sans-serif;font-size:13.5px;font-weight:normal;color:#444;left:599.10px;top:464.67px;transform-origin:0 0;transform:scaleX(1.1842);">0</div>
<div style="position:absolute;white-space:pre;line-height:13.5px;font-family:'Liberation Sans', sans-serif;font-size:13.5px;font-weight:normal;color:#444;left:593.30px;top:617.27px;transform-origin:0 0;transform:scaleX(1.2234);">-1</div>
<div style="position:absolute;white-space:pre;line-height:13.5px;font-family:'Liberation Sans', sans-serif;font-size:13.5px;font-weight:normal;color:#444;left:592.50px;top:769.87px;transform-origin:0 0;transform:scaleX(1.2900);">-2</div>
<div style="position:absolute;white-space:pre;line-height:13.5px;font-family:'Liberation Sans', sans-serif;font-size:13.5px;font-weight:normal;color:#222;-webkit-text-stroke:0.15px #222;left:844.60px;top:210.37px;transform-origin:0 0;transform:scaleX(1.2742);">609699 (act, NCI-60) vs. SLFN11 (exp, NCI-60)</div>
<div style="position:absolute;white-space:pre;line-height:13.5px;font-family:'Liberation Sans', sans-serif;font-size:13.5px;font-weight:normal;color:#222;-webkit-text-stroke:0.15px #222;left:848.80px;top:227.97px;transform-origin:0 0;transform:scaleX(1.2901);">Pearson correlation (r)=0.78, p-value=3.6e-13</div>
<div style="position:absolute;white-space:pre;line-height:13.5px;font-family:'Liberation Sans', sans-serif;font-size:13.5px;font-weight:normal;color:#222;left:942.30px;top:891.07px;transform-origin:0 0;transform:scaleX(1.2431);">SLFN11 (exp, NCI-60)</div>
<div style="position:absolute;white-space:pre;line-height:13.5px;font-family:'Liberation Sans', sans-serif;font-size:13.5px;font-weight:normal;color:#222;left:580.07px;top:628.40px;transform-origin:0 0;transform:rotate(-90deg) scaleX(1.1645);">609699 (act, NCI-60)</div>
<div style="position:absolute;white-space:pre;line-height:13.5px;font-family:'Liberation Sans', sans-serif;font-size:13.5px;font-weight:normal;color:#333;left:1481.80px;top:268.97px;">Blood</div>
<div style="position:absolute;white-space:pre;line-height:13.5px;font-family:'Liberation Sans', sans-serif;font-size:13.5px;font-weight:normal;color:#333;left:1481.80px;top:292.34px;">Bowel</div>
<div style="position:absolute;white-space:pre;line-height:13.5px;font-family:'Liberation Sans', sans-serif;font-size:13.5px;font-weight:normal;color:#333;left:1481.80px;top:315.71px;">Brain_CNS</div>
<div style="position:absolute;white-space:pre;line-height:13.5px;font-family:'Liberation Sans', sans-serif;font-size:13.5px;font-weight:normal;color:#333;left:1481.80px;top:339.08px;">Breast</div>
<div style="position:absolute;white-space:pre;line-height:13.5px;font-family:'Liberation Sans', sans-serif;font-size:13.5px;font-weight:normal;color:#333;left:1481.80px;top:362.45px;">Kidney</div>
<div style="position:absolute;white-space:pre;line-height:13.5px;font-family:'Liberation Sans', sans-serif;font-size:13.5px;font-weight:normal;color:#333;left:1481.80px;top:385.82px;">Lung</div>
<div style="position:absolute;white-space:pre;line-height:13.5px;font-family:'Liberation Sans', sans-serif;font-size:13.5px;font-weight:normal;color:#333;left:1481.80px;top:409.19px;">Ovary</div>
<div style="position:absolute;white-space:pre;line-height:13.5px;font-family:'Liberation Sans', sans-serif;font-size:13.5px;font-weight:normal;color:#333;left:1481.80px;top:432.56px;">Prostate</div>
<div style="position:absolute;white-space:pre;line-height:13.5px;font-family:'Liberation Sans', sans-serif;font-size:13.5px;font-weight:normal;color:#333;left:1481.80px;top:455.93px;">Skin</div>
<div style="position:absolute;white-space:pre;line-height:27px;font-family:'Liberation Sans', sans-serif;font-size:27px;font-weight:bold;color:#0b70c0;left:1134.50px;top:106.94px;transform-origin:0 0;transform:scaleX(0.9938);">Pearson’s correlation</div>
<div style="position:absolute;white-space:pre;line-height:27px;font-family:'Liberation Sans', sans-serif;font-size:27px;font-weight:bold;color:#0b70c0;left:1133.50px;top:144.44px;transform-origin:0 0;transform:scaleX(1.0185);">and p-value</div>
<div style="position:absolute;white-space:pre;line-height:27px;font-family:'Liberation Sans', sans-serif;font-size:27px;font-weight:bold;color:#0b70c0;left:615.90px;top:248.04px;">Drug: Topotecan</div>
<div style="position:absolute;white-space:pre;line-height:27px;font-family:'Liberation Sans', sans-serif;font-size:27px;font-weight:bold;color:#0b70c0;left:616.00px;top:285.54px;transform-origin:0 0;transform:scaleX(0.9980);">NSC 609699</div>
<div style="position:absolute;white-space:pre;line-height:27px;font-family:'Liberation Sans', sans-serif;font-size:27px;font-weight:bold;color:#0b70c0;left:616.00px;top:323.74px;transform-origin:0 0;transform:scaleX(1.0255);">from NCI60</div>
<div style="position:absolute;white-space:pre;line-height:27px;font-family:'Liberation Sans', sans-serif;font-size:27px;font-weight:bold;color:#0b70c0;left:927.20px;top:717.94px;transform-origin:0 0;transform:scaleX(0.9892);">SLFN11 Gene</div>
<div style="position:absolute;white-space:pre;line-height:27px;font-family:'Liberation Sans', sans-serif;font-size:27px;font-weight:bold;color:#0b70c0;left:927.00px;top:755.74px;transform-origin:0 0;transform:scaleX(1.0122);">expression from NCI60</div>
<div style="position:absolute;white-space:pre;line-height:28px;font-family:'Liberation Sans', sans-serif;font-size:28px;font-weight:normal;color:#ff0000;-webkit-text-stroke:0.5px #f00;left:133.60px;top:290.00px;transform-origin:0 0;transform:rotate(-90deg) scaleX(0.9725);">1-Specify x-axis</div>
<div style="position:absolute;white-space:pre;line-height:28px;font-family:'Liberation Sans', sans-serif;font-size:28px;font-weight:normal;color:#ff0000;-webkit-text-stroke:0.5px #f00;left:132.90px;top:574.30px;transform-origin:0 0;transform:rotate(-90deg) scaleX(0.9877);">2-Specify y-axis</div>
<div style="position:absolute;white-space:pre;line-height:28px;font-family:'Liberation Sans', sans-serif;font-size:28px;font-weight:normal;color:#ff0000;-webkit-text-stroke:0.5px #f00;left:130.00px;top:891.80px;transform-origin:0 0;transform:rotate(-90deg) scaleX(0.9899);">3-Specify tissues</div>
</body></html>
